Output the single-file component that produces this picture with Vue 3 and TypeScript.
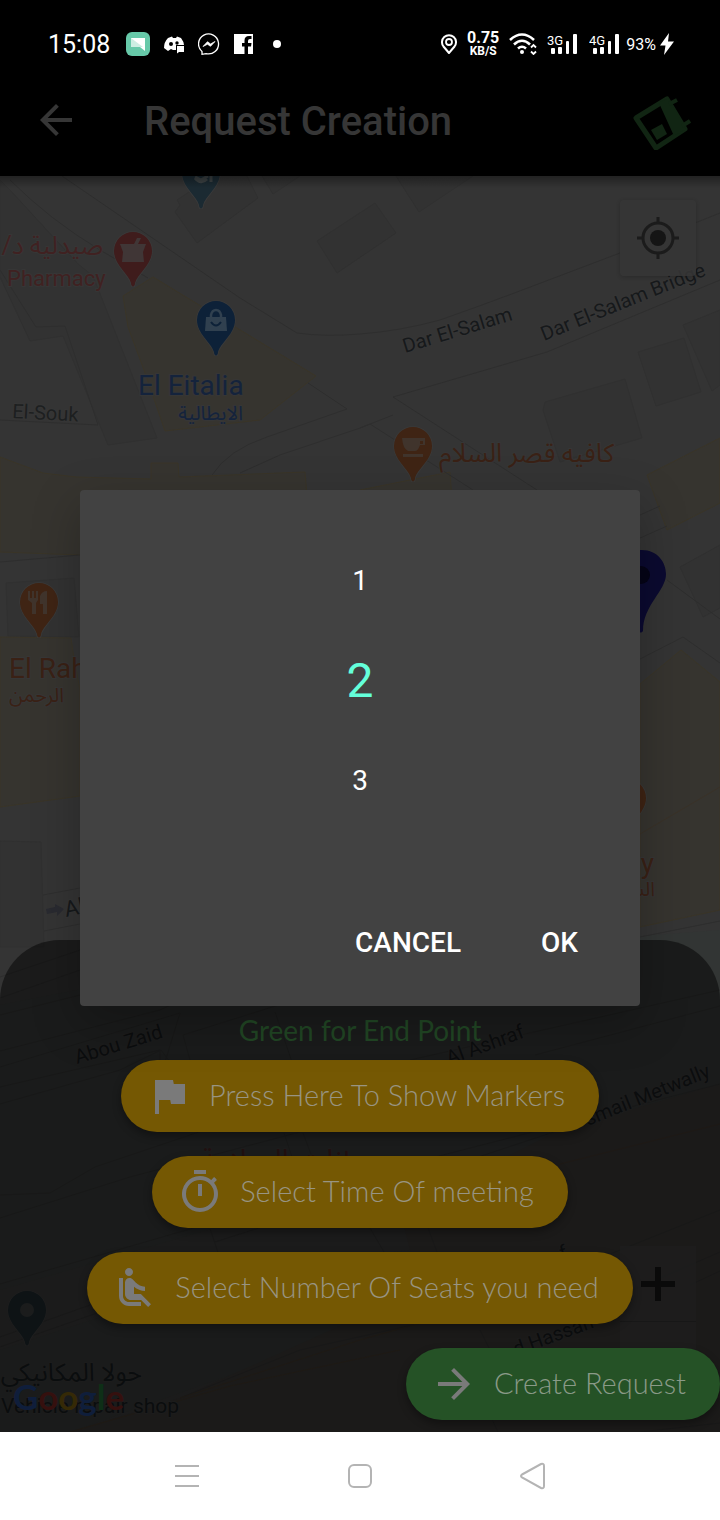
<script setup lang="ts">
import { ref } from 'vue'

interface MapLabel {
  text: string
  x: number
  y: number
  size: number
  color: string
  rotate?: number
  rtl?: boolean
  end?: boolean
}

interface Pin {
  x: number
  y: number
  color: string
  kind: 'school' | 'pharmacy' | 'bag' | 'cup' | 'food' | 'dot' | 'plain'
}

const seats = [1, 2, 3]
const selected = ref(2)

const areas: string[] = [
  'M153 277L316 376L260 420L165 431L144 370L128 327L123 296Z',
  'M0 457L43 473L76 477L151 479V463H178L179 477L305 472L312 555H80L0 552Z',
  'M0 637L71 638L73 652L80 690V796L0 807Z',
  'M360 490L450 472L452 500H360Z',
  'M647 475L720 438V503L667 530Z',
  'M640 684L681 650L720 682V910L640 927Z',
]

const buildings: string[] = [
  'M175 212L180 205L177 200L213 176H247L258 198L197 243Z',
  'M262 176L273 194L300 176Z',
  'M317 241L375 203L396 233L337 273Z',
  'M396 176L419 212L473 176Z',
  'M545 402L625 379L642 438L560 462L543 410Z',
  'M638 352L684 338L701 392L656 406Z',
  'M683 325L720 310V385L712 391Z',
  'M10 190L78 264L93 276L157 438L108 445L63 336L30 341L0 277V180Z',
  'M6 583L74 578L79 637L8 636Z',
  'M0 841L41 842L44 947H0Z',
  'M680 567L720 545V608L703 617Z',
]

const roads: string[] = [
  'M10 180Q50 220 100 250L148 278',
  'M62 176L240 298L297 333Q325 337 360 334Q400 331 440 320Q480 306 517 292L620 253L720 213',
  'M720 280L547 352L393 397L537 490',
  'M360 428L370 424L473 490',
  'M308 383L347 409L267 437Q228 450 212 475',
  'M393 415L360 428L280 455L240 473',
  'M0 270L36 327L65 326L98 425L0 420',
  'M640 659L683 637L720 663',
  'M667 580L720 619',
  'M640 515L660 506M640 538L667 526',
  'M0 562L80 555',
  'M43 895L80 888M44 931L80 924',
  'M640 937L720 921',
  'M0 977L80 950L200 915',
  'M0 998L80 970M0 1015L160 975L300 938',
  'M0 1051L160 1010L175 1003',
  'M0 1067L180 1013L165 1062M0 1087L160 1050V1060',
  'M0 1104L120 1070L161 1050L170 1062',
  'M183 1035L320 992L520 950M183 1035L190 1060',
  'M275 1012L292 1062M410 1060L720 990M720 1006L535 1055',
  'M0 1195L50 1193L95 1167L190 1135L300 1098',
  'M0 1218L130 1177L300 1132M284 1133L292 1157M303 1133L315 1165',
  'M0 1284L190 1229L400 1166L720 1084',
  'M210 1229L218 1252M215 1242L390 1186L560 1130',
  'M370 1228L384 1252M428 1228L440 1260',
  'M0 1337L90 1305M0 1347L100 1312L230 1270',
  'M180 1398L300 1350L480 1310',
  'M610 1254L720 1210M610 1300L720 1252M690 1285L720 1271',
  'M480 1330L495 1360M490 1415L498 1432M640 1432L720 1423',
]

const edges: string[] = [
  'M640 834L720 787',
  'M560 1164L720 1124',
  'M180 1398L360 1340L520 1295',
  'M70 1432L230 1386L400 1350',
]

const labels: MapLabel[] = [
  { text: 'صيدلية د/', x: 103, y: 254, size: 25, color: '#402121', rtl: true },
  { text: 'Pharmacy', x: 7, y: 286, size: 22, color: '#402121' },
  { text: 'El Eitalia', x: 138, y: 395, size: 28, color: '#14233c' },
  { text: 'الايطالية', x: 243, y: 420, size: 20, color: '#14233c', rtl: true },
  { text: 'El-Souk', x: 12, y: 418, size: 20, color: '#1d1f20', rotate: 3 },
  { text: 'Dar El-Salam', x: 405, y: 353, size: 20, color: '#16191b', rotate: -17 },
  { text: 'Dar El-Salam Bridge', x: 544, y: 341, size: 20, color: '#16191b', rotate: -22 },
  { text: 'كافيه قصر السلام', x: 614, y: 462, size: 26, color: '#3a2115', rtl: true },
  { text: 'El Rah', x: 9, y: 678, size: 28, color: '#3a2115' },
  { text: 'الرحمن', x: 64, y: 702, size: 20, color: '#3a2115', rtl: true },
  { text: 'y', x: 654, y: 873, size: 28, color: '#3a2115', end: true },
  { text: 'الس', x: 655, y: 896, size: 20, color: '#3a2115', rtl: true },
  { text: 'Al', x: 66, y: 917, size: 22, color: '#16191b', rotate: -12 },
  { text: 'Abou Zaid', x: 77, y: 1064, size: 20, color: '#16191b', rotate: -17 },
  { text: 'Al Ashraf', x: 449, y: 1065, size: 20, color: '#16191b', rotate: -20 },
  { text: 'smail Metwally', x: 588, y: 1126, size: 20, color: '#16191b', rotate: -22 },
  { text: 'إنات السلامة', x: 350, y: 1170, size: 30, color: '#3f2020', rtl: true },
  { text: 'f', x: 562, y: 1260, size: 20, color: '#16191b', rotate: -18 },
  { text: 'd Hassan', x: 516, y: 1356, size: 20, color: '#16191b', rotate: -20 },
  { text: 'حولا المكانيكي', x: 142, y: 1381, size: 25, color: '#15191b', rtl: true },
  { text: 'Vehicle repair shop', x: 1, y: 1413, size: 21, color: '#15191b' },
]

const pins: Pin[] = [
  { x: 201, y: 173, color: '#1b2a32', kind: 'school' },
  { x: 133, y: 251, color: '#3f1c1c', kind: 'pharmacy' },
  { x: 216, y: 320, color: '#0d2138', kind: 'bag' },
  { x: 413, y: 446, color: '#3f2414', kind: 'cup' },
  { x: 39, y: 602, color: '#3f2414', kind: 'food' },
  { x: 627, y: 798, color: '#3f2414', kind: 'plain' },
  { x: 27, y: 1310, color: '#1b2529', kind: 'dot' },
]

const googleLetters = [
  { ch: 'G', color: '#1e3a72' },
  { ch: 'o', color: '#66201c' },
  { ch: 'o', color: '#66500c' },
  { ch: 'g', color: '#1e3a72' },
  { ch: 'l', color: '#1c5a2c' },
  { ch: 'e', color: '#66201c' },
]
</script>

<template>
  <div class="phone">
    <div class="screen">
      <header class="status">
        <div class="status-left">
          <span class="clock">15:08</span>
          <svg width="24" height="24" viewBox="0 0 24 24"><rect width="24" height="24" rx="6" fill="#67c9a9" /><path d="M5 6H19V19L14 15H5Z" fill="#fff" /><path d="M5 6L17 15H5Z" fill="#cdeee3" /></svg>
          <svg width="20" height="20" viewBox="0 0 20 20"><path d="M4 4L8 2.500L9 4H12L13 2.500L17 4Q20 8 20 11H12V16H9L7 15L4 17L0 14Q0 8 4 4Z" fill="#fff" /><circle cx="7" cy="10" r="2" /><circle cx="13" cy="9" r="1.700" /><path d="M13 12H20V18H15L13 19.500Z" fill="#fff" /></svg>
          <svg width="22" height="22" viewBox="0 0 22 22"><path d="M4 18.500A10 10 0 1 1 8 20.600L4 21.300Z" fill="none" stroke="#fff" stroke-width="1.300" /><path d="M5 13.500L9.500 8.700L12.500 11L17 8.500L12.500 13.300L9.500 11.200Z" fill="#fff" stroke="#fff" stroke-width=".8" /></svg>
          <svg width="19" height="20" viewBox="0 0 19 20"><path d="M0 0H19V20H14V12.500H17L17.500 9H14V7Q14 5 16 5H17.500V2H15Q10.500 2 10.500 6.500V9H8V12.500H10.500V20H0Z" fill="#fff" /></svg>
          <i class="more-dot"></i>
        </div>
        <div class="status-right">
          <svg width="16" height="20" viewBox="0 0 16 20"><path d="M8 19L2.500 12.500A7 7 0 1 1 13.500 12.500Z" fill="none" stroke="#fff" stroke-width="2" /><circle cx="8" cy="8" r="3" fill="none" stroke="#fff" stroke-width="1.800" /></svg>
          <span class="speed"><b>0.75</b><small>KB/S</small></span>
          <svg width="28" height="22" viewBox="0 0 28 22"><g fill="none" stroke="#fff" stroke-width="2.600"><path d="M1 7Q13 -4 25 7" /><path d="M5 11.500Q13 4 21 11.500" /><path d="M9 15.500Q13 12 17 15.500" /></g><circle cx="13" cy="19" r="2" fill="#fff" /><path d="M22 14.500L24.500 12L27 14.500M22 18.500L24.500 21L27 18.500" fill="none" stroke="#fff" stroke-width="1.800" /></svg>
          <svg v-for="net in ['3G', '4G']" :key="net" class="signal" width="30" height="22" viewBox="0 0 30 22"><text x="0" y="12" font-size="13" fill="#fff">{{ net }}</text><g fill="#fff"><rect x="4" y="15" width="4" height="6" rx="1" /><rect x="11" y="14" width="4" height="7" rx="1" /><rect x="19" y="8" width="3" height="13" rx="1" /><rect x="26" y="1" width="4" height="20" rx="1" /></g></svg>
          <span class="battery">93%</span>
          <svg class="bolt" width="14" height="22" viewBox="0 0 14 22"><path d="M9 0L0 12.500H5.500L4 22L14 8.500H8Z" fill="#fff" /></svg>
        </div>
      </header>

      <div class="appbar">
        <button class="plain" aria-label="Back">
          <svg width="48" height="48" viewBox="0 0 24 24"><path d="M20 11H7.830L13.420 5.410L12 4L4 12L12 20L13.410 18.590L7.830 13H20Z" fill="#363636" /></svg>
        </button>
        <h1>Request Creation</h1>
        <svg width="60" height="60" viewBox="0 0 60 60"><path d="M5 28L36 9L54 39L25 58Z" fill="none" stroke="#112513" stroke-width="5" stroke-linejoin="round" /><path d="M28 13L37 8L55 39L43 46Z" fill="#112513" /><path d="M38 14L46 10M51 36L59 31" stroke="#112513" stroke-width="4" /><path d="M20 40L31 34L36 44L26 50Z" fill="#112513" /></svg>
      </div>

      <main class="map">
        <svg class="canvas" viewBox="0 176 720 1256" preserveAspectRatio="xMidYMin slice">
          <defs>
            <linearGradient id="bar-shade" x1="0" y1="0" x2="0" y2="1"><stop offset="0" stop-opacity=".35" /><stop offset="1" stop-opacity="0" /></linearGradient>
          </defs>
          <path d="M0 176H720V1432H0Z" fill="#343434" />
          <path d="M0 1005L180 970L720 930V1120L420 1170L190 1235L0 1290ZM0 1350L230 1275L480 1240L300 1350L70 1432H0Z" fill="#323534" />
          <path d="M720 1084L560 1130L400 1210L420 1290L180 1398L70 1432H720Z" fill="#353230" />
          <path v-for="d in buildings" :key="d" :d="d" fill="#323232" stroke="#303030" />
          <path v-for="d in areas" :key="d" :d="d" fill="#36342f" stroke="#3a3528" />
          <path v-for="d in roads" :key="d" :d="d" fill="none" stroke="#2e2e2e" />
          <path v-for="d in edges" :key="d" :d="d" fill="none" stroke="#3a3228" />
          <path d="M46 909L55 907V904L64 909L57 916V912L47 914Z" fill="#292a30" />
          <g v-for="p in pins" :key="p.x" :transform="`translate(${p.x} ${p.y})`">
            <path d="M0 35.500C-1 35.500 -2 34 -2 32C-5 22 -19 14 -19 0A19 19 0 1 1 19 0C19 14 5 22 2 32C2 34 1 35.500 0 35.500Z" :fill="p.color" stroke="#3a3a3a" stroke-width="1.500" paint-order="stroke" />
            <g v-if="p.kind === 'school'" fill="none" stroke="#3c4244" stroke-width="3"><path d="M-6 5Q0 12 6 6M-6 4L0 7L7 3M10 -2V9" /></g>
            <path v-else-if="p.kind === 'pharmacy'" d="M-13 -7H1L4 -13H8L5 -7H13L10 1L11 11H-11L-10 1Z" fill="#403636" />
            <g v-else-if="p.kind === 'bag'"><path d="M-10 -3H10L11 11H-11Z" fill="#30404f" /><path d="M-5 -3V-5Q-4 -10 0 -10Q4 -10 5 -5V-3" fill="none" stroke="#30404f" stroke-width="2.500" /><path d="M-5 2Q0 9 5 2" fill="none" stroke="#0d2138" stroke-width="2" /></g>
            <g v-else-if="p.kind === 'cup'" fill="#40342c"><path d="M-11 -8H12V-1H7Q5 5 2 5H-5Q-10 3 -11 -8Z" /><path d="M7 -5H10V-2H7Z" fill="#3f2414" /><path d="M-10 8H10V11H-10Z" /></g>
            <g v-else-if="p.kind === 'food'" fill="#40342c"><path d="M-11 -11H-9V-4H-7V-11H-5V-4H-3V-11H-1V-2L-3 1V12H-7V1L-11 -2Z" /><path d="M1 -6Q3 -11 8 -11V12H4V2H1Z" /></g>
            <circle v-else-if="p.kind === 'dot'" r="7" fill="#343737" />
          </g>
          <path d="M640 550C657 549 666 562 666 574C666 591 643 605 643 631Q641 634 638 631C638 605 614 591 614 574C614 560 626 550 640 550Z" fill="#0b0a30" />
          <circle cx="641" cy="575" r="9" fill="#050417" />
          <text v-for="l in labels" :key="l.text" class="label" :direction="l.rtl ? 'rtl' : 'ltr'" :font-size="l.size" :fill="l.color" :text-anchor="l.end ? 'end' : 'start'" :transform="`translate(${l.x} ${l.y}) rotate(${l.rotate ?? 0})`">{{ l.text }}</text>
          <path d="M0 176H720V188H0Z" fill="url(#bar-shade)" />
        </svg>

        <button class="locate" aria-label="My location">
          <svg width="42" height="42" viewBox="0 0 42 42"><g fill="none" stroke="#1b1b1b"><circle cx="21" cy="21" r="15" stroke-width="3" /><path d="M21 0V6M21 36V42M0 21H6M36 21H42" stroke-width="3" /></g><circle cx="21" cy="21" r="8" fill="#151515" /></svg>
        </button>
        <div class="zoom">
          <button aria-label="Zoom in"><svg width="34" height="34" viewBox="0 0 34 34"><path d="M17 0V34M0 17H34" stroke="#151515" stroke-width="6" /></svg></button>
          <button aria-label="Zoom out"></button>
        </div>
        <div class="google"><span v-for="(g, i) in googleLetters" :key="i" :style="{ color: g.color }">{{ g.ch }}</span></div>

        <section class="panel">
          <p class="hint">Green for End Point</p>
          <button class="pill">
            <svg width="48" height="48" viewBox="0 0 24 24"><path d="M14.400 6L14 4H5V21H7V14H12.600L13 16H20V6Z" /></svg>
            <span>Press Here To Show Markers</span>
          </button>
          <button class="pill">
            <svg width="48" height="48" viewBox="0 0 24 24"><path d="M15 1H9V3H15ZM11 14H13V8H11ZM19.030 7.390L20.450 5.970C20.020 5.460 19.550 4.980 19.040 4.560L17.620 5.980C16.070 4.740 14.120 4 12 4A9 9 0 1 0 19.030 7.390ZM12 20A7 7 0 1 1 12 6A7 7 0 0 1 12 20Z" /></svg>
            <span>Select Time Of meeting</span>
          </button>
          <button class="pill">
            <svg width="48" height="48" viewBox="0 0 24 24"><path d="M7.590 5.410C6.810 4.630 6.810 3.370 7.590 2.590C8.370 1.810 9.630 1.810 10.410 2.590C11.190 3.370 11.190 4.630 10.410 5.410C9.630 6.200 8.370 6.200 7.590 5.410ZM6 16V7H4V16C4 18.760 6.240 21 9 21H15V19H9C7.340 19 6 17.660 6 16ZM20 20.070L14.930 15H11.500V11.320C12.900 12.470 15.100 13.480 17 13.480V11.320C15.340 11.340 13.390 10.450 12.330 9.280L10.930 7.730C10.740 7.520 10.500 7.350 10.240 7.230C9.950 7.090 9.620 7 9.280 7H9.250C8.010 7 7 8.010 7 9.250V15C7 16.660 8.340 18 10 18H15.070L18.570 21.500Z" /></svg>
            <span>Select Number Of Seats you need</span>
          </button>
          <button class="pill create">
            <svg width="48" height="48" viewBox="0 0 24 24"><path d="M12 4L10.590 5.410L16.170 11H4V13H16.170L10.590 18.590L12 20L20 12Z" /></svg>
            <span>Create Request</span>
          </button>
        </section>
      </main>

      <div class="overlay">
        <div class="dialog" role="dialog" aria-label="Number of seats" aria-modal="true">
          <div class="picker">
            <button v-for="n in seats" :key="n" :class="{ active: n === selected }" @click="selected = n">{{ n }}</button>
          </div>
          <div class="actions">
            <button>CANCEL</button>
            <button>OK</button>
          </div>
        </div>
      </div>
    </div>

    <nav class="navbar">
      <button aria-label="Recent apps"><svg width="24" height="24" viewBox="0 0 24 24"><path d="M0 2H24M0 12H24M0 22H24" /></svg></button>
      <button aria-label="Home"><svg width="24" height="24" viewBox="0 0 24 24"><rect x="1" y="1" width="22" height="22" rx="5" /></svg></button>
      <button aria-label="Back"><svg width="26" height="28" viewBox="0 0 26 28"><path d="M2 12.500L21 2Q24 1 24 4V24Q24 27 21 26L2 15.500Q0 14 2 12.500Z" /></svg></button>
    </nav>
  </div>
</template>

<style>
body {
  margin: 0;
  background: #000;
}
</style>

<style scoped>
.phone {
  display: flex;
  flex-direction: column;
  min-height: 100vh;
  font-family: Roboto, "Noto Sans", sans-serif;
}
button {
  display: flex;
  align-items: center;
  justify-content: center;
  margin: 0;
  padding: 0;
  border: 0;
  background: none;
  font-family: inherit;
  cursor: pointer;
}
svg {
  display: block;
  flex: none;
}
.screen {
  position: relative;
  flex: 1;
  display: flex;
  flex-direction: column;
  background: #000;
}
.status {
  box-sizing: border-box;
  height: 64px;
  padding: 24px 46px 0 48px;
  display: flex;
  align-items: center;
  justify-content: space-between;
  color: #fff;
}
.status-left {
  display: flex;
  align-items: center;
  gap: 14px;
}
.clock {
  font-size: 25px;
  margin-right: 2px;
}
.more-dot {
  width: 8px;
  height: 8px;
  margin-left: 6px;
  border-radius: 50%;
  background: #fff;
}
.status-right {
  display: flex;
  align-items: center;
  gap: 10px;
}
.signal + .signal {
  margin-left: 2px;
}
.speed {
  display: flex;
  flex-direction: column;
  align-items: center;
}
.speed b {
  font-size: 16px;
  line-height: 14px;
}
.speed small {
  font-size: 12px;
  line-height: 12px;
  font-weight: 700;
}
.battery {
  margin-left: -3px;
  font-size: 16px;
}
.bolt {
  margin-left: -6px;
}
.appbar {
  height: 112px;
  padding: 0 29px 0 32px;
  display: flex;
  align-items: center;
}
.appbar h1 {
  flex: 1;
  margin: 0 0 0 64px;
  padding-top: 4px;
  font-size: 40px;
  font-weight: 500;
  line-height: 48px;
  color: #363636;
}
.map {
  position: relative;
  flex: 1;
  display: flex;
  flex-direction: column;
  justify-content: flex-end;
  overflow: hidden;
}
.canvas {
  position: absolute;
  inset: 0;
  width: 100%;
  height: 100%;
}
.label {
  font-family: Roboto, "Noto Sans Arabic", "DejaVu Sans", sans-serif;
  stroke: #363636;
  stroke-width: 2px;
  paint-order: stroke;
}
.google {
  position: absolute;
  left: 13px;
  bottom: 14px;
  font-family: Lato, sans-serif;
  font-size: 35px;
  font-weight: 700;
  line-height: 44px;
}
.locate {
  position: absolute;
  top: 24px;
  right: 24px;
  width: 76px;
  height: 76px;
  background: rgba(54, 54, 54, 0.85);
  border-radius: 4px;
  box-shadow: 0 1px 4px rgba(0, 0, 0, 0.2);
}
.zoom {
  position: absolute;
  right: 24px;
  bottom: 36px;
  width: 76px;
  background: rgba(56, 56, 56, 0.85);
}
.zoom button {
  width: 76px;
  height: 75px;
}
.zoom button + button {
  border-top: 1px solid #2c2c2c;
}
.panel {
  position: relative;
  display: flex;
  flex-direction: column;
  align-items: center;
  gap: 24px;
  padding: 72px 0 12px;
  border-radius: 60px 60px 0 0;
  background: rgba(0, 0, 0, 0.48);
  font-family: Lato, sans-serif;
}
.hint {
  margin: 0 0 -12px;
  font-size: 28px;
  line-height: 36px;
  color: #214624;
}
.pill {
  height: 72px;
  padding: 0 34px 0 24px;
  gap: 16px;
  border-radius: 36px;
  background: #755803;
  box-shadow: 0 4px 8px rgba(0, 0, 0, 0.35);
  box-sizing: border-box;
  font-size: 29px;
  font-weight: 300;
  white-space: nowrap;
  color: #989482;
}
.pill span {
  padding-bottom: 4px;
}
.pill svg {
  fill: #7a7a7a;
}
.create {
  align-self: flex-end;
  background: #255226;
  color: #8a9a88;
}
.overlay {
  position: absolute;
  inset: 64px 0 0;
  display: flex;
  align-items: center;
  justify-content: center;
  padding: 0 80px;
}
.dialog {
  flex: 1;
  padding: 40px 0 28px;
  border-radius: 4px;
  background: #424242;
  box-shadow: 0 16px 48px rgba(0, 0, 0, 0.25);
}
.picker {
  display: flex;
  flex-direction: column;
  align-items: center;
  margin-bottom: 76px;
}
.picker button {
  width: 200px;
  height: 100px;
  font-size: 28px;
  color: #fff;
}
.picker .active {
  font-size: 48px;
  color: #64ffda;
}
.actions {
  display: flex;
  justify-content: flex-end;
  gap: 16px;
  padding-right: 30px;
}
.actions button {
  height: 72px;
  padding: 0 32px;
  font-size: 28px;
  font-weight: 500;
  color: #fff;
}
.navbar {
  height: 88px;
  display: flex;
  justify-content: center;
  background: #fff;
}
.navbar button {
  width: 24%;
}
.navbar svg {
  fill: none;
  stroke: #b4b4b4;
  stroke-width: 2;
}
</style>
